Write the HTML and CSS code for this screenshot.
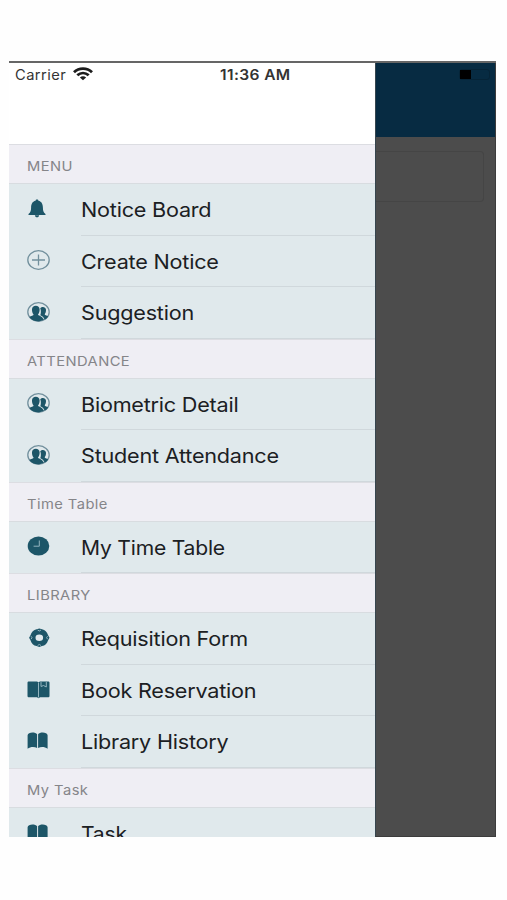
FILE: index.html
```html
<!DOCTYPE html>
<html lang="en">
<head>
<meta charset="UTF-8">
<meta name="viewport" content="width=device-width, initial-scale=1.0">
<title>Menu</title>
<link rel="stylesheet" href="styles.css">
</head>
<body>

<!-- ICONS -->
<svg class="icon-defs" width="0" height="0">
    <symbol id="bell" viewBox="0 0 24 20">
        <path d="M10 0.500C10.9 0.500 11.4 1 11.4 1.700C14.8 2.400 15.8 5.3 15.9 8.4C16 11.6 16.3 13.2 18.5 14.9V16H1.5V14.9C3.7 13.2 4 11.6 4.1 8.4C4.2 5.3 5.2 2.400 8.6 1.700C8.6 1 9.1 0.500 10 0.500Z"/>
        <path d="M7.9 16.3H12.1C11.9 17.800 11.2 18.3 10 18.3S8.1 17.800 7.9 16.3Z"/>
    </symbol>
    <symbol id="plus" viewBox="0 0 24 20">
        <ellipse class="thin" cx="11.5" cy="10" rx="10.7" ry="9.3"/>
        <path class="thin" d="M5 10H18M11.5 4.5V15.5"/>
    </symbol>
    <symbol id="people" viewBox="0 0 24 20">
        <ellipse class="thin" cx="11.5" cy="10" rx="10.7" ry="9.3"/>
        <path d="M2.4 15C4 13.7 6.6 13.8 6.6 12.6C5.3 11.2 4.9 9.2 5 7.3C5.1 5.1 6.6 3.800 8.8 3.800S12.5 5.1 12.600 7.3C12.700 9.2 12.2 11.2 11 12.6C11.200 14 14 13.6 15.9 16.2L17 17.5C13 20.300 5.500 20.300 2.4 15Z"/>
        <path d="M13.2 6.300C14 5.200 15 4.900 15.800 4.900C17.800 4.900 19 6.200 19 8C19 9.800 18.500 11.200 17.700 12.200C17.900 13.400 19.500 13.300 21.200 14.200C20.300 16 18.900 17.200 17.600 17.500C16.700 15.200 15.300 13.900 13.300 13.200C13.900 11.800 14.300 8.500 13.200 6.300Z"/>
    </symbol>
    <symbol id="clock" viewBox="0 0 24 20">
        <ellipse cx="11.5" cy="10" rx="10.8" ry="9.6"/>
        <path class="hand" d="M12.3 4.5V10.2H6.6"/>
    </symbol>
    <symbol id="ring" viewBox="0 0 24 20">
        <path fill-rule="evenodd" d="M12.300 0.500L15 1.300C18 2 20.200 4 21 7L22.500 9.700L21 12.400C20.200 15.400 18 17.400 15 18.100L12.300 19L9.600 18.100C6.600 17.400 4.400 15.400 3.600 12.400L2.100 9.700L3.600 7C4.400 4 6.600 2 9.600 1.300ZM12.300 6.500A3.800 3.300 0 1 0 12.300 13.100A3.800 3.300 0 1 0 12.300 6.500Z"/>
        <path class="notch" d="M10.600 2L12.300 3L14 2M10.600 17.500L12.300 16.500L14 17.500M4 8.200L5 9.700L4 11.200M20.600 8.200L19.600 9.700L20.600 11.200"/>
    </symbol>
    <symbol id="book-mark" viewBox="0 0 24 20">
        <path d="M2 1.500H10L11.500 2.200L13 1.500H21C22 1.500 22.500 2 22.500 2.800V16C22.500 16.900 22 17.300 21 17.300H13L11.500 18.300L10 17.300H2C1 17.300 0.500 16.900 0.500 16V2.800C0.500 2 1 1.500 2 1.500Z"/>
        <path class="hand" d="M11.500 2.500V17.500M14 2V6.500L16.500 5.500L19.300 7V2"/>
    </symbol>
    <symbol id="book" viewBox="0 0 24 20">
        <path d="M0.600 4.300C1 0.800 8.500 0.800 10.100 3.300V17C7.400 15.300 3.300 15.500 0.600 17.800ZM11.100 3.300C12.700 0.800 20.200 0.800 20.600 4.300V17.800C17.900 15.500 13.800 15.300 11.100 17Z"/>
    </symbol>
</svg>

<div class="screen">
    <!-- SIDE MENU -->
    <div class="drawer">
        <div class="status-bar">
            <span class="carrier">Carrier</span>
            <svg class="wifi" viewBox="0 0 20 14">
                <path d="M1 5.300C6 0.500 14 0.500 19 5.300M4.300 8.300C7.700 5.300 12.300 5.300 15.700 8.300"/>
                <path class="dot" d="M6.900 10.400C8.700 8.900 11.300 8.900 13.100 10.400L10 13.300Z"/>
            </svg>
            <span class="time">11:36 AM</span>
        </div>

        <div class="section-title"><span>MENU</span></div>
        <div class="row"><svg class="icon"><use href="#bell"/></svg><div class="label"><span>Notice Board</span></div></div>
        <div class="row"><svg class="icon"><use href="#plus"/></svg><div class="label"><span>Create Notice</span></div></div>
        <div class="row"><svg class="icon"><use href="#people"/></svg><div class="label"><span>Suggestion</span></div></div>

        <div class="section-title"><span>ATTENDANCE</span></div>
        <div class="row"><svg class="icon"><use href="#people"/></svg><div class="label"><span>Biometric Detail</span></div></div>
        <div class="row"><svg class="icon"><use href="#people"/></svg><div class="label"><span>Student Attendance</span></div></div>

        <div class="section-title"><span>Time Table</span></div>
        <div class="row"><svg class="icon"><use href="#clock"/></svg><div class="label"><span class="tight">My Time Table</span></div></div>

        <div class="section-title"><span>LIBRARY</span></div>
        <div class="row"><svg class="icon"><use href="#ring"/></svg><div class="label"><span>Requisition Form</span></div></div>
        <div class="row"><svg class="icon"><use href="#book-mark"/></svg><div class="label"><span>Book Reservation</span></div></div>
        <div class="row"><svg class="icon"><use href="#book"/></svg><div class="label"><span>Library History</span></div></div>

        <div class="section-title"><span>My Task</span></div>
        <div class="row"><svg class="icon"><use href="#book"/></svg><div class="label"><span class="tight">Task</span></div></div>
    </div>

    <!-- DIMMED PAGE BEHIND THE MENU -->
    <div class="page">
        <div class="navbar">
            <div class="battery"><div class="level"></div></div>
        </div>
        <div class="field"></div>
    </div>
</div>

</body>
</html>
```
FILE: styles.css
```css
* {
    box-sizing: border-box;
}

body {
    margin: 0;
    height: 900px;
    padding: 61px 0 0 9px;
    background: #fefefe;
    font-family: Inter, "Liberation Sans", sans-serif;
    overflow: hidden;
}

.icon-defs {
    position: absolute;
}

.screen {
    display: flex;
    width: 487px;
    height: 776px;
    overflow: hidden;
    border-top: 2px solid #666;
}

/* SIDE MENU */
.drawer {
    width: 366px;
    flex-shrink: 0;
    background: #fff;
}

.status-bar {
    display: flex;
    align-items: center;
    height: 81px;
    padding: 0 0 59px 6px;
    color: #333;
    font-size: 14px;
}

.carrier,
.time {
    white-space: nowrap;
    transform-origin: left;
}

.carrier {
    width: 51px;
    letter-spacing: 0.4px;
    transform: scaleX(1.05);
}

.wifi {
    width: 20px;
    height: 14px;
    margin-left: 7px;
    fill: none;
    stroke: #1c1c1c;
    stroke-width: 2.8;
}

.wifi .dot {
    fill: #1c1c1c;
    stroke: none;
}

.time {
    margin-left: 127px;
    font-weight: 600;
    letter-spacing: 0.35px;
    transform: scaleX(1.11);
}

.section-title {
    height: 40.2px;
    padding: 3px 0 0 18px;
    background: #efeef4;
    border-top: 1px solid #dcdde2;
    border-bottom: 1px solid #d8dce0;
    color: #858589;
    font-size: 13.5px;
    line-height: 37px;
    letter-spacing: 0.4px;
}

.section-title span {
    display: inline-block;
    transform: scaleX(1.09);
    transform-origin: left;
}

.row {
    display: flex;
    align-items: center;
    height: 51.45px;
    background: #e0e9ec;
}

.icon {
    width: 24px;
    height: 20px;
    margin: 0 30px 2px 18px;
    flex-shrink: 0;
    fill: #1d5668;
}

.thin {
    fill: none;
    stroke: #72909d;
    stroke-width: 1.3;
}

.hand,
.notch {
    fill: none;
    stroke: #93b4bf;
    stroke-width: 1;
}

.label {
    flex: 1;
    height: 100%;
    border-bottom: 1px solid #d0d8dc;
    color: #1b2023;
    font-size: 20px;
    line-height: 52px;
    letter-spacing: -0.2px;
    white-space: nowrap;
}

.label span {
    display: inline-block;
    transform: scaleX(1.08);
    transform-origin: left;
}

.label .tight {
    transform: scaleX(1.055);
}

/* DIMMED PAGE */
.page {
    flex: 1;
    background: #4c4c4c;
    border-left: 1px solid #36454e;
    border-right: 1px solid #3c3c3c;
    border-bottom: 1px solid #3c3c3c;
}

.navbar {
    display: flex;
    justify-content: flex-end;
    height: 74px;
    padding: 6px 5px 0 0;
    background: #072b42;
}

.battery {
    width: 31px;
    height: 11px;
    border: 1px solid #062437;
    border-radius: 3px;
}

.level {
    width: 11px;
    height: 9px;
    background: #000;
}

.field {
    height: 51px;
    margin: 14px 11px 0 0;
    border: 1px solid #454545;
    border-left: none;
    border-radius: 0 4px 4px 0;
}
```
